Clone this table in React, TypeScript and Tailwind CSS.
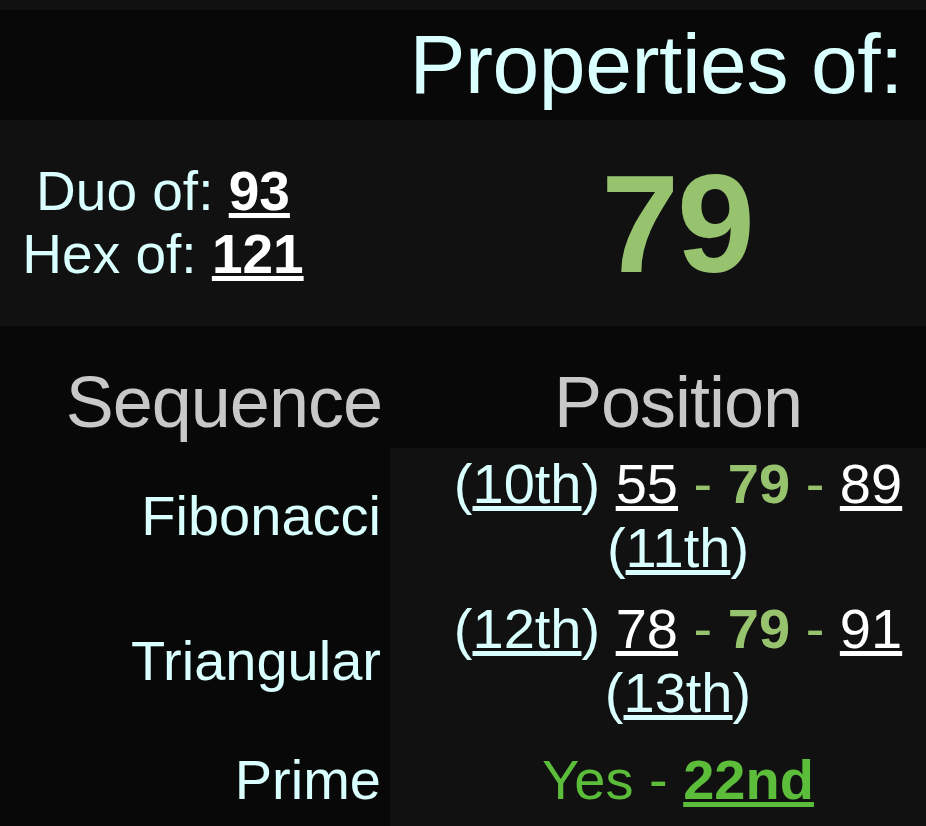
const cyan = "text-[#d9ffff]"

function Ul({ children, className = "" }: { children: React.ReactNode; className?: string }) {
  return <span className={`underline ${className}`}>{children}</span>
}

function Neighbours({ prevPos, prev, next, nextPos }: { prevPos: string; prev: string; next: string; nextPos: string }) {
  return (
    <>
      <span className={cyan}>
        (<Ul>{prevPos}</Ul>)
      </span>{" "}
      <Ul className="text-white">{prev}</Ul>{" "}
      <span className="text-[#97c36f]">-</span>{" "}
      <span className="font-bold text-[#97c36f]">79</span>{" "}
      <span className="text-[#97c36f]">-</span>{" "}
      <Ul className="text-white">{next}</Ul>{" "}
      <span className={cyan}>
        (<Ul>{nextPos}</Ul>)
      </span>
    </>
  )
}

export default function App() {
  const rows = [
    {
      label: "Fibonacci",
      pad: "pt-[4px] pb-[12px]",
      value: <Neighbours prevPos="10th" prev="55" next="89" nextPos="11th" />,
    },
    {
      label: "Triangular",
      pad: "pt-[4px] pb-[19px]",
      value: <Neighbours prevPos="12th" prev="78" next="91" nextPos="13th" />,
    },
    {
      label: "Prime",
      pad: "pt-[4px] pb-[14px]",
      value: (
        <span className="text-[#5bbd3a]">
          Yes - <Ul className="font-bold">22nd</Ul>
        </span>
      ),
    },
  ]

  return (
    <div className="h-[826px] overflow-hidden bg-[#111111] pt-[10px] font-['Liberation_Sans',Arial,sans-serif] leading-[1.15]">
      <div className={`h-[110px] bg-[#080808] pt-[6px] pr-[23px] text-right text-[84px] tracking-[-0.43px] ${cyan}`}>
        Properties of:
      </div>

      <div className="flex h-[206px] items-center bg-[#111111]">
        <div className={`w-[326px] text-center text-[55px] ${cyan}`}>
          <div>
            Duo of: <Ul className="font-bold text-white">93</Ul>
          </div>
          <div>
            Hex of: <Ul className="font-bold text-white">121</Ul>
          </div>
        </div>
        <div className="flex-1 pl-[102px] text-center text-[140px] font-bold tracking-[-2px] text-[#97c36f]">79</div>
      </div>

      <div className="grid grid-cols-[390px_1fr] bg-[#080808]">
        <div className="pt-[35px] pb-[4px] pr-[8px] text-right text-[72px] tracking-[-1px] text-[#c8c8c8]">Sequence</div>
        <div className="pt-[35px] pb-[4px] pl-[40px] text-center text-[72px] tracking-[-1px] text-[#c8c8c8]">Position</div>

        {rows.map((r) => (
          <div key={r.label} className="contents">
            <div className={`flex items-center justify-end pr-[9px] text-[56px] ${cyan} ${r.pad}`}>{r.label}</div>
            <div className={`bg-[#111111] pl-[40px] text-center text-[56px] ${r.pad}`}>{r.value}</div>
          </div>
        ))}
      </div>
    </div>
  )
}
